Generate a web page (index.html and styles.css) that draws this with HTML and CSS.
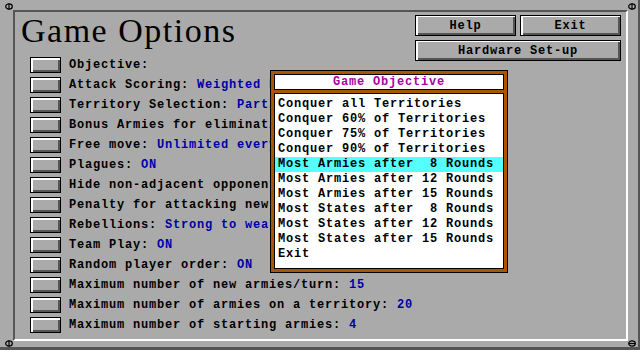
FILE: index.html
```html
<!DOCTYPE html>
<html>
  <head>
    <meta charset="utf-8">
    <title>Game Options</title>
    <link rel="stylesheet" href="styles.css">
  </head>
  <body>
    <div class="screen">
      <svg class="grip grip-tl" width="8" height="7" viewBox="0 0 8 7"><ellipse cx="4" cy="3.5" rx="3.3" ry="2.6" fill="none" stroke="#000" stroke-width="1.2"/><line x1="4" y1="0.5" x2="4" y2="6.5" stroke="#000" stroke-width="1.2"/></svg>
      <svg class="grip grip-tr" width="8" height="7" viewBox="0 0 8 7"><ellipse cx="4" cy="3.5" rx="3.3" ry="2.6" fill="none" stroke="#000" stroke-width="1.2"/><line x1="4" y1="0.5" x2="4" y2="6.5" stroke="#000" stroke-width="1.2"/></svg>
      <svg class="grip grip-bl" width="8" height="7" viewBox="0 0 8 7"><ellipse cx="4" cy="3.5" rx="3.3" ry="2.6" fill="none" stroke="#000" stroke-width="1.2"/><line x1="4" y1="0.5" x2="4" y2="6.5" stroke="#000" stroke-width="1.2"/></svg>
      <svg class="grip grip-br" width="8" height="7" viewBox="0 0 8 7"><ellipse cx="4" cy="3.5" rx="3.3" ry="2.6" fill="none" stroke="#000" stroke-width="1.2"/><line x1="0.5" y1="3.5" x2="7.5" y2="3.5" stroke="#000" stroke-width="1.2"/></svg>

      <div class="frame">
        <div class="main">
          <h1 class="title">Game Options</h1>
          <ul class="options">
            <li class="option"><span class="check"></span><span class="label">Objective:</span></li>
            <li class="option"><span class="check"></span><span class="label">Attack Scoring: <span class="value">Weighted by Armies</span></span></li>
            <li class="option"><span class="check"></span><span class="label">Territory Selection: <span class="value">Partial Random</span></span></li>
            <li class="option"><span class="check"></span><span class="label">Bonus Armies for eliminating player: <span class="value">ON</span></span></li>
            <li class="option"><span class="check"></span><span class="label">Free move: <span class="value">Unlimited every turn</span></span></li>
            <li class="option"><span class="check"></span><span class="label">Plagues: <span class="value">ON</span></span></li>
            <li class="option"><span class="check"></span><span class="label">Hide non-adjacent opponents: <span class="value">ON</span></span></li>
            <li class="option"><span class="check"></span><span class="label">Penalty for attacking new ally: <span class="value">ON</span></span></li>
            <li class="option"><span class="check"></span><span class="label">Rebellions: <span class="value">Strong to weak</span></span></li>
            <li class="option"><span class="check"></span><span class="label">Team Play: <span class="value">ON</span></span></li>
            <li class="option"><span class="check"></span><span class="label">Random player order: <span class="value">ON</span></span></li>
            <li class="option"><span class="check"></span><span class="label">Maximum number of new armies/turn: <span class="value">15</span></span></li>
            <li class="option"><span class="check"></span><span class="label">Maximum number of armies on a territory: <span class="value">20</span></span></li>
            <li class="option"><span class="check"></span><span class="label">Maximum number of starting armies: <span class="value">4</span></span></li>
          </ul>
        </div>
        <div class="actions">
          <div class="action-row">
            <button class="btn">Help</button>
            <button class="btn">Exit</button>
          </div>
          <button class="btn">Hardware Set-up</button>
        </div>
      </div>

      <div class="popup">
        <div class="popup-title">Game Objective</div>
        <ul class="popup-list">
          <li>Conquer all Territories</li>
          <li>Conquer 60% of Territories</li>
          <li>Conquer 75% of Territories</li>
          <li>Conquer 90% of Territories</li>
          <li class="selected">Most Armies after  8 Rounds</li>
          <li>Most Armies after 12 Rounds</li>
          <li>Most Armies after 15 Rounds</li>
          <li>Most States after  8 Rounds</li>
          <li>Most States after 12 Rounds</li>
          <li>Most States after 15 Rounds</li>
          <li>Exit</li>
        </ul>
      </div>
    </div>
  </body>
</html>
```

FILE: styles.css
```css
body {
  margin: 0;
  background: #aaaaaa;
}
.screen {
  position: relative;
  width: 638px;
  height: 347px;
  background: #aaaaaa;
  border-right: 2px solid #555555;
  border-bottom: 3px solid #555555;
  font-family: "Liberation Mono", "DejaVu Sans Mono", monospace;
  font-weight: bold;
  font-size: 12px;
  letter-spacing: 0.8px;
  color: #000;
}
.grip {
  position: absolute;
  display: block;
}
.grip-tl { left: 5px; top: 3px; }
.grip-tr { left: 628px; top: 3px; }
.grip-bl { left: 5px; top: 340px; }
.grip-br { left: 628px; top: 340px; }

.frame {
  position: absolute;
  left: 13px;
  top: 10px;
  width: 611px;
  height: 327px;
  border-top: 2px solid #555555;
  border-left: 2px solid #555555;
  border-right: 2px solid #ffffff;
  border-bottom: 2px solid #ffffff;
  display: flex;
  justify-content: space-between;
}
.main {
  display: flex;
  flex-direction: column;
}
.title {
  margin: 0;
  height: 45px;
  padding-left: 6px;
  font-family: "Liberation Serif", "Times New Roman", serif;
  font-weight: normal;
  font-size: 34px;
  letter-spacing: 1.5px;
  line-height: normal;
}
.options {
  list-style: none;
  margin: 0;
  padding: 0 0 0 15px;
  display: flex;
  flex-direction: column;
  gap: 4px;
}
.option {
  display: flex;
  align-items: center;
  height: 16px;
  white-space: nowrap;
}
.check {
  box-sizing: border-box;
  width: 31px;
  height: 16px;
  border: 1px solid #000;
  background: #aaaaaa;
  box-shadow: inset 2px 2px #ffffff, inset -2px -2px #555555;
}
.label {
  margin-left: 8px;
}
.value {
  color: #0000aa;
}

.actions {
  padding: 3px 5px 0 0;
  display: flex;
  flex-direction: column;
  gap: 4px;
}
.action-row {
  display: flex;
  gap: 4px;
}
.btn {
  box-sizing: border-box;
  height: 21px;
  min-width: 101px;
  padding: 0;
  border: 1px solid #000;
  background: #aaaaaa;
  box-shadow: inset 2px 1px #ffffff, inset -2px -2px #555555;
  font: inherit;
  letter-spacing: inherit;
  color: #000;
}

.popup {
  position: absolute;
  left: 270px;
  top: 70px;
  width: 230px;
  height: 195px;
  border: 1px solid #000;
  background: #aa5500;
  padding: 3px;
  box-sizing: content-box;
  display: flex;
  flex-direction: column;
  gap: 3px;
}
.popup-title {
  height: 14px;
  border: 1px solid #000;
  background: #ffffff;
  color: #aa00aa;
  text-align: center;
  line-height: 14px;
}
.popup-list {
  flex: 1;
  list-style: none;
  margin: 0;
  padding: 3px 0 2px 0;
  border: 1px solid #000;
  background: #ffffff;
}
.popup-list li {
  height: 15px;
  line-height: 15px;
  padding-left: 3px;
  white-space: pre;
}
.popup-list .selected {
  background: #55ffff;
}
```
